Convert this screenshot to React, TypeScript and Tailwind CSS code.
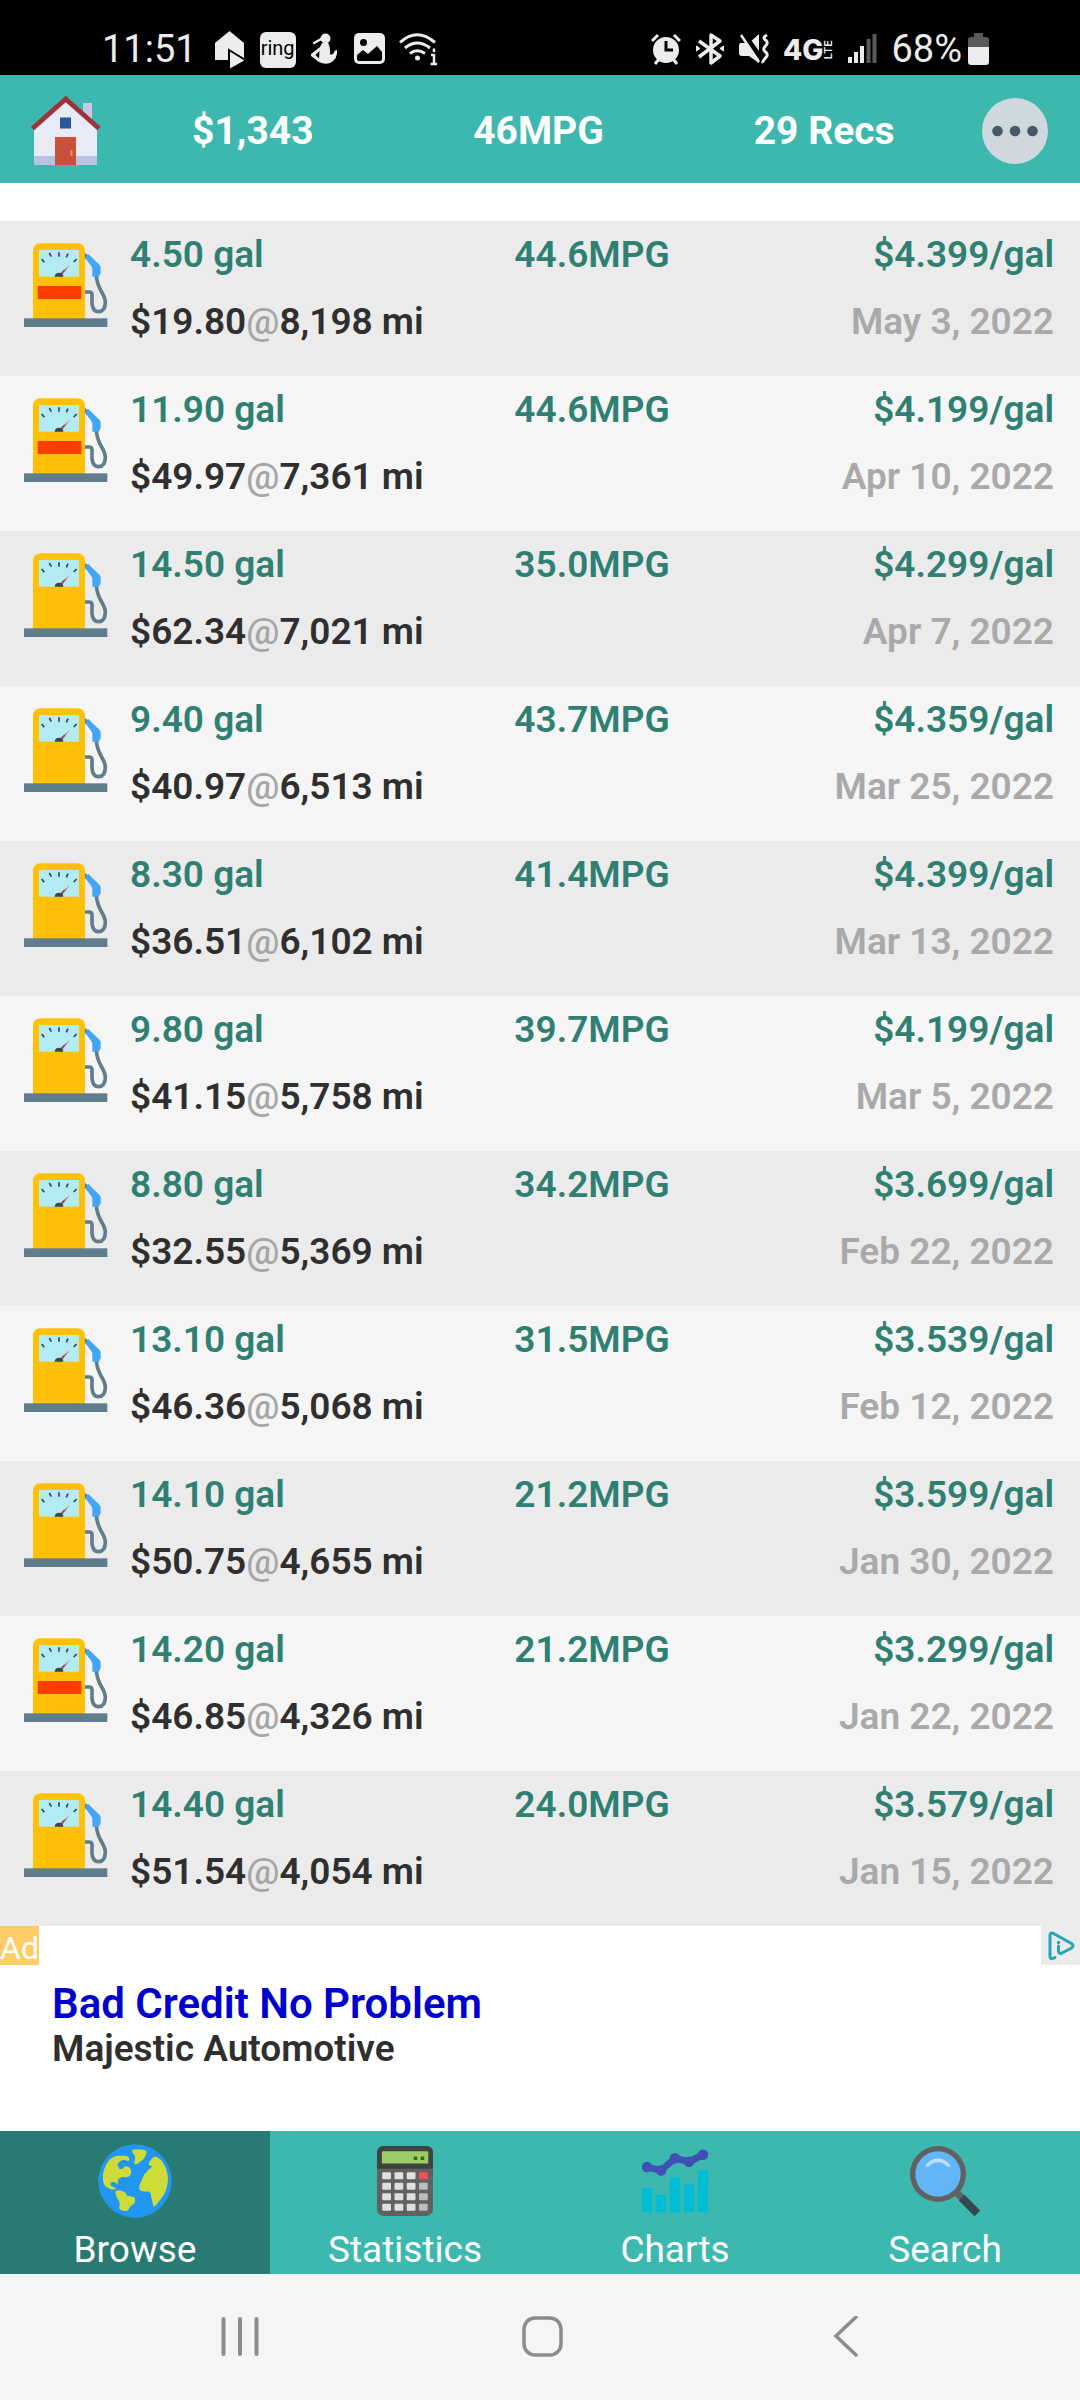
import React, { useState } from "react";
import clsx from "clsx";
import { FcComboChart } from "react-icons/fc";

type FillUp = {
  gallons: string;
  mpg: string;
  price: string;
  total: string;
  odometer: string;
  date: string;
  partial?: boolean;
};

type Tab = "browse" | "statistics" | "charts" | "search";

const FILL_UPS: FillUp[] = [
  { gallons: "4.50", mpg: "44.6", price: "4.399", total: "19.80", odometer: "8,198", date: "May 3, 2022", partial: true },
  { gallons: "11.90", mpg: "44.6", price: "4.199", total: "49.97", odometer: "7,361", date: "Apr 10, 2022", partial: true },
  { gallons: "14.50", mpg: "35.0", price: "4.299", total: "62.34", odometer: "7,021", date: "Apr 7, 2022" },
  { gallons: "9.40", mpg: "43.7", price: "4.359", total: "40.97", odometer: "6,513", date: "Mar 25, 2022" },
  { gallons: "8.30", mpg: "41.4", price: "4.399", total: "36.51", odometer: "6,102", date: "Mar 13, 2022" },
  { gallons: "9.80", mpg: "39.7", price: "4.199", total: "41.15", odometer: "5,758", date: "Mar 5, 2022" },
  { gallons: "8.80", mpg: "34.2", price: "3.699", total: "32.55", odometer: "5,369", date: "Feb 22, 2022" },
  { gallons: "13.10", mpg: "31.5", price: "3.539", total: "46.36", odometer: "5,068", date: "Feb 12, 2022" },
  { gallons: "14.10", mpg: "21.2", price: "3.599", total: "50.75", odometer: "4,655", date: "Jan 30, 2022" },
  { gallons: "14.20", mpg: "21.2", price: "3.299", total: "46.85", odometer: "4,326", date: "Jan 22, 2022", partial: true },
  { gallons: "14.40", mpg: "24.0", price: "3.579", total: "51.54", odometer: "4,054", date: "Jan 15, 2022" },
];

const HouseIcon = () => (
  <svg width="72" height="72" viewBox="0 0 72 72" aria-hidden="true">
    <rect x="53" y="8" width="9" height="20" fill="#c5cae9" />
    <path d="M4 70V34L35.700 4L67 34V70Z" fill="#e8eaf6" />
    <rect x="4" y="61" width="63" height="9" fill="#b6c3e4" />
    <path d="M2.500 33.500L35.700 4L69 33.500" fill="none" stroke="#9c343a" strokeWidth="5" />
    <rect x="30" y="22.500" width="11" height="11" fill="#285896" />
    <rect x="25" y="42" width="21" height="28" fill="#c9503b" />
    <rect x="40.500" y="55" width="2" height="6" rx="1" fill="#ff8a65" />
  </svg>
);

const MoreIcon = () => (
  <svg width="66" height="66" viewBox="0 0 66 66" aria-hidden="true">
    <circle cx="33" cy="33" r="33" fill="#cfd8dc" />
    <g fill="#455a64">
      <circle cx="15.500" cy="33" r="5.300" />
      <circle cx="33" cy="33" r="5.300" />
      <circle cx="50.500" cy="33" r="5.300" />
    </g>
  </svg>
);

// The orange-red band marks a partial fill
const PumpIcon = ({ partial }: { partial?: boolean }) => (
  <svg
    className="mt-5 shrink-0"
    width="90"
    height="90"
    viewBox="30 60 270 270"
    aria-hidden="true"
  >
    <path
      d="M224 213H238Q246 213 246 222V247Q248 272 266 272Q286 271 286 243C285 215 260 208 259 160"
      fill="none"
      stroke="#607d8b"
      strokeWidth="11"
    />
    <path d="M222 93L235 104L230 116L222 108Z" fill="#607d8b" />
    <path d="M234 98L269 132Q272 135 272 140V157L266 167H247V142Q245 136 241 131L226 112Z" fill="#42a5f5" />
    <path d="M69 294V91Q69 67 93 67H201Q225 67 225 91V294Z" fill="#ffc107" />
    <rect x="87" y="87" width="120" height="80" fill="#b2ebf2" />
    <g stroke="#37474f" strokeWidth="5">
      <path d="M95 114L103 124M118 96L124 107M147 94V107M174 98L169 109M200 114L191 123" />
    </g>
    <path d="M144 164L179 132L153 167Z" fill="#d9505a" />
    <path d="M134 167A13 12 0 0 1 160 167Z" fill="#37474f" />
    <path d="M145 165L164 146" stroke="#37474f" strokeWidth="3" />
    {partial && <rect x="83" y="195" width="131" height="39" fill="#ff3d00" />}
    <rect x="42" y="292" width="250" height="26" fill="#607d8b" />
  </svg>
);

const GlobeIcon = () => (
  <svg width="84" height="84" viewBox="0 0 48 48" aria-hidden="true">
    <circle cx="24" cy="24" r="21" fill="#2196f3" />
    <g fill="#cddc39">
      <path d="M5.700 23.500C5.500 20 6 18 6.900 16C8 13.500 9 11.800 10.900 10.700C12.500 9.800 14 9.400 15.800 9.600C17.500 9.500 19.300 9.300 20.300 10.300C21 11.200 20.800 12 20.300 12.600C19.500 12.600 18.800 11.800 17.700 12C16.400 12.200 15.500 12.600 14.800 13.400C14 14 13.700 14.600 14.200 15.300C15 16 14.500 16.800 15.200 17.100C16 17.300 16.800 17 17.300 16.700C17.500 15.900 18.300 15.400 19.100 15.600C20.200 16 21 16.300 21.500 17.300C22 18.400 22 19.300 21.500 20.100C21 21.200 20.300 21.600 19.300 21.800C18.200 22 17 21.500 16.200 22C15 22.500 14.300 22.800 14.200 23.500C14.100 24.500 14.800 25.500 14.400 25.800C13.600 25.700 13.200 24.900 12.400 24.700C11.500 24.600 10.500 24.500 10.100 25C9.800 25.600 10 26.300 10.500 26.900C11.500 27.300 13 28 13 28.800C12 29 10.500 28.900 9.500 28.400C8.500 28 7.600 27.600 7.100 26.900C6.300 26 5.900 24.800 5.700 23.500Z" />
      <path d="M13 29.700C14 29.200 15 29.100 15.800 29.400C17 30 18.300 30.300 18.900 31.100C19 32 19.400 32.400 20.100 32.400C21.500 32.700 23.500 33 24 33.900C24.100 35 24 36 23.600 36.700C22.900 37.600 21.900 37.800 21.300 38.600C20.600 39.400 20.600 40.300 19.700 40.900C19.200 41.300 18.700 41.300 18.100 41.200C17 40.900 15.700 40.500 15 39.500C14.900 38.300 15.500 37 15 35.800C14.600 34.800 13.600 34 13.400 32.900C13.200 31.800 12.600 30.500 13 29.700Z" />
      <path d="M22.400 6.200L26.600 5.800C28 5.900 30 6 30.500 6.800C30.800 7.800 30.500 8.800 30.100 9.400C29.500 10.800 28.500 11.700 27.500 12.600C26.700 13.200 26 14 25.200 14.300C24.400 14.700 23.600 14.400 23.600 13.700C23.600 12.500 24.300 11.500 24 10.300C23.700 8.800 22.200 8 22.400 6.200Z" />
      <path d="M34.800 10.300C35.800 10 36.700 10.300 37.400 10.900C38.700 11.800 39.600 12.800 40.300 14.100C41.400 15.800 42.100 17.700 42.500 19.800C42.900 21.500 42.900 23 42.700 24.500C42.500 26.500 42.100 28.400 41.300 30.100C40.500 31.900 39.500 33.400 38.300 34.800C37.300 36.200 35.500 38.600 34.600 38.600C34.200 37.500 34 35.500 33.400 33.900C33.200 32.500 33.200 31 32.200 30.100C30.800 29.800 28.800 30.300 27.500 29.600C26.600 29.300 26.400 28.800 26.400 28.200C26.500 27.300 26.300 26.200 26.900 25.400C27.600 24.600 27.700 23.600 28.300 22.600C28.700 21 29.500 19.600 30.700 18.800C31.600 17.600 32.800 16.700 33.800 15.600C33.300 15.100 32.300 15.600 32 14.700C31.700 13.900 32.200 13.200 32.600 12.600C33.200 11.700 33.900 10.800 34.800 10.300Z" />
    </g>
  </svg>
);

const CalculatorIcon = () => (
  <svg width="84" height="84" viewBox="0 0 48 48" aria-hidden="true">
    <rect x="8" y="4" width="32" height="40" rx="4" fill="#616161" />
    <path d="M12 4H36Q40 4 40 8V17H8V8Q8 4 12 4Z" fill="#424242" />
    <rect x="10.800" y="7" width="26.500" height="7" rx="0.500" fill="#9ccc65" />
    <path d="M29 10H31V12H29ZM33 10H35V12H33Z" fill="#33691e" />
    {[19, 25, 31, 37].map((y, row) => (
      <React.Fragment key={y}>
        {[11, 18, 25].map(x => (
          <rect key={x} x={x} y={y} width="5" height="4" rx="0.600" fill="#e0e0e0" />
        ))}
        <rect
          x="32"
          y={y}
          width="5"
          height="4"
          rx="0.600"
          fill={row === 0 ? "#f44f56" : "#bdbdbd"}
        />
      </React.Fragment>
    ))}
  </svg>
);

const SearchIcon = () => (
  <svg width="84" height="84" viewBox="0 0 48 48" aria-hidden="true">
    <path d="M29 29L36 36" stroke="#616161" strokeWidth="4" />
    <path d="M33.500 33.500L42.500 42.500" stroke="#37474f" strokeWidth="4.600" />
    <circle cx="20" cy="20" r="16" fill="#616161" />
    <circle cx="20" cy="20" r="13" fill="#64b5f6" />
    <path
      d="M14 15Q20 9.500 26 15"
      fill="none"
      stroke="#bbdefb"
      strokeWidth="2"
      strokeLinecap="round"
    />
  </svg>
);

const AdChoicesIcon = () => (
  <svg width="39" height="39" viewBox="0 0 39 39" fill="none" aria-hidden="true">
    <path
      d="M14 31.500Q9 34.500 9 30V9.500Q9 6 12.500 7.500L30.500 17.500Q33.500 19.500 30.500 22L21 27Q17.500 28.500 17.500 25V20"
      stroke="#26a5b5"
      strokeWidth="3"
      strokeLinecap="round"
      strokeLinejoin="round"
    />
    <circle cx="17.500" cy="16.500" r="1.700" fill="#26a5b5" />
  </svg>
);

const StatusBar = () => (
  <div className="flex h-[75px] items-center justify-between bg-black pt-6 pr-[91px] pl-[102px] text-[38px] text-[#ececec]">
    <div className="flex items-center gap-3.5">
      <span className="mr-1">11:51</span>
      <svg width="31" height="40" viewBox="0 0 31 40" aria-hidden="true">
        <path d="M0 13L14.500 1L29 13V30H0Z" fill="#ececec" />
        <path d="M14 20L31 30.500L14 40Z" fill="#ececec" stroke="#000" strokeWidth="2" />
      </svg>
      <span className="flex h-9 w-9 items-center justify-center rounded-md bg-[#ececec] pb-1 text-[20px] leading-none text-black">
        ring
      </span>
      <svg width="30" height="40" viewBox="0 0 30 40" aria-hidden="true">
        <path d="M4 13L13 8" stroke="#ececec" strokeWidth="2.500" strokeLinecap="round" />
        <circle cx="15.500" cy="8.500" r="5" fill="#ececec" />
        <path d="M12 13H18Q20.500 17 20 24Q23 26 25 20.500L27 20Q28 29 20 33Q15 35 9 32L1 26V24L10 17Z" fill="#ececec" />
        <path d="M9.500 21L5.500 25L9 28.500Z" fill="#000" />
      </svg>
      <svg width="31" height="40" viewBox="0 0 31 40" aria-hidden="true">
        <rect y="3" width="31" height="31" rx="5" fill="#ececec" />
        <circle cx="9.500" cy="12.500" r="3.500" fill="#000" />
        <path d="M3 25L9 20L14 24L23 16L28 22V29Q28 31 26 31H5Q3 31 3 29Z" fill="#000" />
      </svg>
      <svg width="38" height="40" viewBox="0 0 38 40" fill="none" stroke="#ececec" strokeWidth="3" aria-hidden="true">
        <path d="M1 12.500Q18 -3 36 12.500M6 18Q18 8 31 18M11 23.500Q18 18 26 23.500" />
        <circle cx="18.500" cy="28" r="2.500" fill="#ececec" stroke="none" />
        <path d="M32 25H35V34M31.500 34H38M35 18.500V22" strokeWidth="2.500" />
      </svg>
    </div>
    <div className="flex items-center gap-3.5">
      <svg width="30" height="40" viewBox="0 0 30 40" aria-hidden="true">
        <path d="M1 11L7 5M29 11L23 5M4 34L8 29M26 34L22 29" stroke="#ececec" strokeWidth="3" />
        <circle cx="15" cy="20" r="13" fill="#ececec" />
        <path d="M15 11V20H22" fill="none" stroke="#000" strokeWidth="3" />
      </svg>
      <svg width="30" height="40" viewBox="0 0 30 40" fill="none" stroke="#ececec" strokeWidth="3.500" strokeLinejoin="round" aria-hidden="true">
        <path d="M4 11L25 26L16 33V5L25 11L4 27" />
        <path d="M1.500 16V21L5 18.500ZM28.500 16V21L25 18.500Z" strokeWidth="1" fill="#ececec" />
      </svg>
      <svg width="30" height="40" viewBox="0 0 30 40" aria-hidden="true">
        <path d="M1 13H10L20 4V33L10 26H3Q0 26 0 23V15Z" fill="#ececec" />
        <path d="M4 3L24 31" stroke="#000" strokeWidth="5" />
        <path d="M2 5L20 32" stroke="#ececec" strokeWidth="2.500" />
        <path d="M28 5Q23 7.500 26.500 10T26.500 16T26.500 22T26.500 28T24 33" fill="none" stroke="#ececec" strokeWidth="3" />
      </svg>
      <span className="flex items-center font-['Inter'] leading-none font-extrabold">
        <span className="text-[28px]">4G</span>
        <span className="rotate-180 text-[11px] font-semibold [writing-mode:vertical-rl]">
          LTE
        </span>
      </span>
      <svg width="29" height="40" viewBox="0 0 29 40" aria-hidden="true">
        <path d="M2 27V33M8 22V33M14 16V33" stroke="#ececec" strokeWidth="4" />
        <path d="M20.500 9V33M26.500 4V33" stroke="#5a5a5a" strokeWidth="4" />
      </svg>
      <span className="flex items-center gap-1.5">
        68%
        <svg width="21" height="40" viewBox="0 0 21 40" aria-hidden="true">
          <path d="M6 3H15V7H18Q21 7 21 10V17H0V10Q0 7 3 7H6Z" fill="#5a5a5a" />
          <path d="M0 17H21V32Q21 35 18 35H3Q0 35 0 32Z" fill="#ececec" />
        </svg>
      </span>
    </div>
  </div>
);

const FillUpRow = ({ fillUp }: { fillUp: FillUp }) => (
  <li className="flex min-h-[155px] bg-[#ebebeb] pr-[26px] pl-5 text-[37px] font-semibold even:bg-[#f5f5f5]">
    <PumpIcon partial={fillUp.partial} />
    <div className="ml-5 flex-1 leading-[67px]">
      <div className="grid grid-cols-3 text-[#2f7f73]">
        <span>{fillUp.gallons} gal</span>
        <span className="text-center">{fillUp.mpg}MPG</span>
        <span className="text-right">${fillUp.price}/gal</span>
      </div>
      <div className="flex justify-between text-[#2f2f2f]">
        <span>
          ${fillUp.total}
          <span className="font-medium text-[#a6a6a6]">@</span>
          {fillUp.odometer} mi
        </span>
        <span className="text-[#a9a9a9]">{fillUp.date}</span>
      </div>
    </div>
  </li>
);

const TABS: { id: Tab; label: string; icon: React.ReactNode }[] = [
  { id: "browse", label: "Browse", icon: <GlobeIcon /> },
  { id: "statistics", label: "Statistics", icon: <CalculatorIcon /> },
  { id: "charts", label: "Charts", icon: <FcComboChart size={84} /> },
  { id: "search", label: "Search", icon: <SearchIcon /> },
];

const App = () => {
  const [activeTab, setActiveTab] = useState<Tab>("browse");

  return (
    <div className="min-h-screen bg-white font-['Roboto',sans-serif]">
      <StatusBar />
      <header className="flex h-[108px] items-center bg-[#3cb8ae] pt-1 text-[39px] font-bold text-white">
        <button aria-label="Home" className="w-[110px] pl-[30px]">
          <HouseIcon />
        </button>
        <div className="grid flex-1 grid-cols-3 text-center">
          <span>$1,343</span>
          <span>46MPG</span>
          <span>29 Recs</span>
        </div>
        <button aria-label="More options" className="flex w-[113px] justify-end pr-8">
          <MoreIcon />
        </button>
      </header>
      <ul className="mt-[38px]">
        {FILL_UPS.map(fillUp => (
          <FillUpRow key={fillUp.odometer} fillUp={fillUp} />
        ))}
      </ul>
      <aside className="flex h-[205px] items-start justify-between">
        <span className="h-[39px] w-[39px] bg-[#ffcc66] text-[32px] leading-[44px] text-white">
          Ad
        </span>
        <a href="#" className="ml-[13px] flex-1 pt-[54px] font-semibold">
          <span className="block text-[42px] leading-[48px] text-[#0000d0]">
            Bad Credit No Problem
          </span>
          <span className="block text-[37px] leading-[42px] text-[#2f2f2f]">
            Majestic Automotive
          </span>
        </a>
        <button aria-label="Ad choices" className="bg-[#ebebeb]">
          <AdChoicesIcon />
        </button>
      </aside>
      <nav className="grid h-[143px] grid-cols-4 bg-[#3cb8ae] text-[37px] text-white">
        {TABS.map(tab => (
          <button
            key={tab.id}
            onClick={() => setActiveTab(tab.id)}
            className={clsx("flex flex-col items-center justify-between pt-2", {
              "bg-[#277b72]": tab.id === activeTab,
            })}
          >
            {tab.icon}
            <span className="leading-[48px]">{tab.label}</span>
          </button>
        ))}
      </nav>
      <div className="grid h-[126px] grid-cols-3 bg-[#f5f5f5] pr-[83px] pl-[88px]">
        <button aria-label="Recent apps" className="flex items-center justify-center">
          <svg width="42" height="42" viewBox="0 0 42 42" stroke="#8c8c8c" strokeWidth="4" strokeLinecap="round">
            <path d="M4.500 3V38M21 3V38M37.500 3V38" />
          </svg>
        </button>
        <button aria-label="Home screen" className="flex items-center justify-center">
          <svg width="42" height="42" viewBox="0 0 42 42" fill="none" stroke="#8c8c8c" strokeWidth="3.500">
            <rect x="2" y="2" width="37" height="37" rx="11" />
          </svg>
        </button>
        <button aria-label="Back" className="flex items-center justify-center">
          <svg width="42" height="42" viewBox="0 0 42 42" fill="none" stroke="#8c8c8c" strokeWidth="3.500" strokeLinecap="round">
            <path d="M31 1L11 20L31 39" />
          </svg>
        </button>
      </div>
    </div>
  );
};

export default App;
